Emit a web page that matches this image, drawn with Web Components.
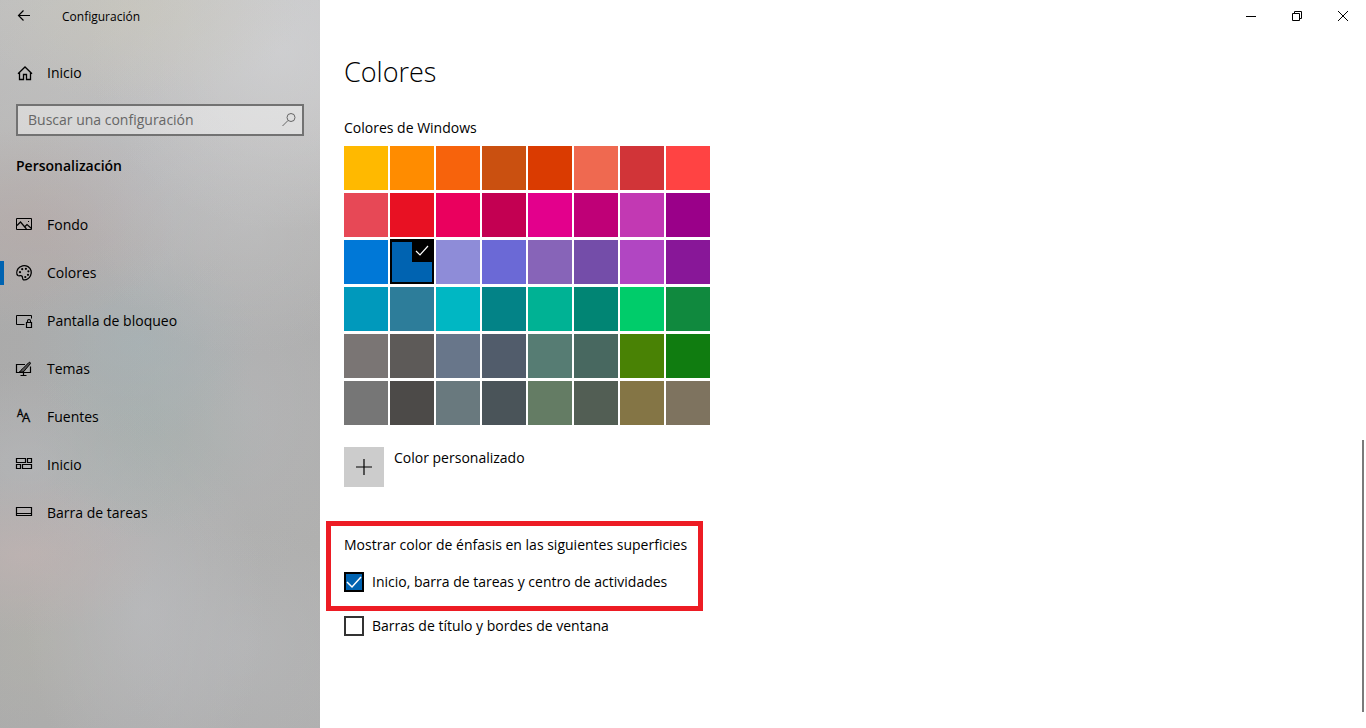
<!DOCTYPE html>
<html lang="es">
<head>
  <meta charset="utf-8">
  <meta name="viewport" content="width=device-width, initial-scale=1">
  <title>Configuración</title>
  <style>
    html, body {
      margin: 0;
      height: 100%;
    }

    body {
      font: 14px/20px "Open Sans", "Noto Sans", sans-serif;
      color: #000;
      background: #fff;
    }
  </style>
</head>
<body>
  <settings-window>
    <settings-sidebar slot="sidebar">
      <nav-item slot="home" icon="home">Inicio</nav-item>
      <search-box slot="search" label="Buscar una configuración"></search-box>
      <nav-item icon="picture">Fondo</nav-item>
      <nav-item icon="palette" active>Colores</nav-item>
      <nav-item icon="lockscreen">Pantalla de bloqueo</nav-item>
      <nav-item icon="themes">Temas</nav-item>
      <nav-item icon="fonts">Fuentes</nav-item>
      <nav-item icon="tiles">Inicio</nav-item>
      <nav-item icon="taskbar">Barra de tareas</nav-item>
    </settings-sidebar>
    <window-controls slot="controls"></window-controls>
    <colors-page></colors-page>
  </settings-window>

  <script>
    const ICONS = {
      back: '<path d="M14 6.500H2.500M7.500 1.500l-5 5 5 5" stroke-width="1.200"/>',
      home: '<path d="m2 8.700 7-6.700 7 6.700M3.500 7.500v7h4v-5h3v5h4v-7" stroke-width="1.300"/>',
      search: '<circle cx="11" cy="5.500" r="4"/><path d="M8 8.500 2.500 14"/>',
      picture: '<path d="M.5 1.500h15v11H.5z"/><path d="M1 8.500 4.500 5l6 7M9 9.500l2-2 4.500 4M12 4.500h1" stroke-width="1.200"/>',
      palette: '<path d="M7.500 14.800c-1.400-.6-.7-2.400-1.300-3.400-1-1.700-2.800.1-4.300-.9C.2 9.100.6 6 2.100 3.700 4.100.7 8.500-.4 12 1.600c3.200 1.900 4.200 6 2.500 9.200-1.500 2.700-4.400 4.400-7 4z" stroke-width="1.300"/><g fill="currentColor" stroke="none"><circle cx="4" cy="7.200" r="1.100"/><circle cx="6.200" cy="4.200" r="1.100"/><circle cx="9.900" cy="3.800" r="1.100"/><circle cx="12.400" cy="6.300" r="1.100"/><circle cx="12" cy="9.800" r="1.100"/><circle cx="9.300" cy="12" r="1.100"/></g>',
      lockscreen: '<path d="M8.500 11.500h-8v-9h15v3"/><path d="M10.500 9.500h5v5h-5zM11.500 9.500V8a1.500 1.500 0 0 1 3 0v1.500" stroke-width="1.200"/>',
      themes: '<path d="M9 3.500H.5v8h14v-6M7.500 12v2M4.500 14.500h6" stroke-width="1.200"/><path d="M3.500 10.500c1.900 0 1.400-2.500 3.200-2.800l6-6c1-1 2.300 0 1.500 1.200L9 9c-.5 1.800-3.400 2.800-5.500 1.500z" fill="#555"/>',
      fonts: '<g fill="currentColor" stroke="currentColor" stroke-width=".3" font-family="Open Sans, sans-serif"><text x="1" y="8" font-size="10">A</text><text x="6" y="13" font-size="13">A</text></g>',
      tiles: '<path d="M.5 1.500h9v4h-9zM11.500 1.500h4v4h-4zM.5 7.500h4v4h-4zM6.500 7.500h9v4h-9z" stroke-width="1.200"/>',
      taskbar: '<path d="M.5 2.500h15v8H.5zM.5 8.500h15" stroke-width="1.200"/>',
      plus: '<path d="M8 0v16M0 8h16" stroke-width="1.200"/>',
      minimize: '<path d="M3 8.500h10"/>',
      restore: '<path d="M3.500 5.500h7v7h-7zM5.500 5.500v-2h7v7h-2"/>',
      close: '<path d="m3 3 10 10M13 3 3 13"/>',
    };

    const icon = (name, size = 16) => `
      <svg width="${ size }" height="${ size }" viewBox="0 0 ${ size } ${ size }" fill="none"
        stroke="currentColor" aria-hidden="true">${ ICONS[name] }</svg>`;

    // base class: every element renders its own template into an open shadow root
    class BaseElement extends HTMLElement {
      connectedCallback () {
        if (this.shadowRoot) return;
        const template = document.createElement('template');
        template.innerHTML = this.render();
        this.attachShadow({ mode: 'open' }).appendChild(template.content.cloneNode(true));
      }
    }

    class SettingsWindow extends BaseElement {
      render () {
        return `
          <style>
            :host {
              display: grid;
              grid-template-columns: 320px 1fr;
              min-height: 100%;
            }
            .page {
              display: grid;
              grid-template-columns: 1fr auto;
              grid-template-rows: auto 1fr;
            }
            header {
              grid-column: 1 / -1;
              display: flex;
              justify-content: flex-end;
            }
            main {
              padding: 20px 24px 24px;
            }
            .rail {
              display: flex;
              align-items: flex-end;
              padding: 0 2px 16px;
            }
            .thumb {
              width: 2px;
              height: 40%;
              background: #7a7a7a;
            }
          </style>
          <slot name="sidebar"></slot>
          <div class="page">
            <header><slot name="controls"></slot></header>
            <main><slot></slot></main>
            <div class="rail"><div class="thumb"></div></div>
          </div>
        `;
      }
    }

    class WindowControls extends BaseElement {
      render () {
        return `
          <style>
            :host { display: flex; }
            button {
              display: grid;
              place-items: center;
              width: 46px;
              height: 32px;
              padding: 0;
              border: 0;
              color: inherit;
              background: none;
            }
            button:hover { background: #e5e5e5; }
          </style>
          <button type="button" aria-label="Minimizar">${ icon('minimize') }</button>
          <button type="button" aria-label="Restaurar">${ icon('restore') }</button>
          <button type="button" aria-label="Cerrar">${ icon('close') }</button>
        `;
      }
    }

    class SettingsSidebar extends BaseElement {
      render () {
        return `
          <style>
            :host {
              display: block;
              /* blurred wallpaper showing through */
              background:
                radial-gradient(ellipse 170px 90px at 130px 10px, rgba(202, 199, 184, .5), transparent),
                radial-gradient(ellipse 190px 180px at 280px 50px, rgba(212, 213, 216, .6), transparent),
                radial-gradient(ellipse 140px 100px at 35px 225px, rgba(184, 168, 166, .5), transparent),
                radial-gradient(ellipse 150px 130px at 245px 225px, rgba(194, 195, 197, .5), transparent),
                radial-gradient(ellipse 110px 130px at 140px 180px, rgba(186, 187, 192, .5), transparent),
                radial-gradient(ellipse 120px 100px at 140px 340px, rgba(166, 180, 184, .6), transparent),
                radial-gradient(ellipse 120px 110px at 150px 430px, rgba(165, 177, 175, .6), transparent),
                radial-gradient(ellipse 120px 160px at 245px 410px, rgba(182, 183, 185, .6), transparent),
                radial-gradient(ellipse 140px 80px at 25px 555px, rgba(194, 180, 179, .7), transparent),
                radial-gradient(ellipse 150px 100px at 30px 465px, rgba(186, 188, 192, .5), transparent),
                radial-gradient(ellipse 120px 190px at 145px 610px, rgba(187, 188, 191, .7), transparent),
                radial-gradient(ellipse 130px 120px at 245px 645px, rgba(184, 185, 187, .6), transparent),
                radial-gradient(ellipse 140px 110px at 40px 640px, rgba(180, 179, 172, .6), transparent),
                linear-gradient(100deg, rgba(160, 160, 160, .25), rgba(200, 200, 200, .1)),
                linear-gradient(#cacaca, #c3c2c1 18%, #b5b4b3 32%, #adadad 46%, #aeaead 75%, #adadad);
            }
            header {
              display: flex;
              align-items: center;
              height: 34px;
              margin-bottom: 15px;
              font-size: 12px;
            }
            header button {
              display: grid;
              place-items: center;
              width: 48px;
              height: 34px;
              margin-right: 14px;
              padding: 0;
              border: 0;
              color: inherit;
              background: none;
            }
            .search { padding: 7px 16px 0; }
            h2 {
              margin: 20px 16px 25px;
              font-size: 14px;
              line-height: 20px;
              font-weight: 600;
            }
          </style>
          <header>
            <button type="button" aria-label="Atrás">${ icon('back') }</button>
            <span>Configuración</span>
          </header>
          <slot name="home"></slot>
          <div class="search"><slot name="search"></slot></div>
          <h2>Personalización</h2>
          <nav><slot></slot></nav>
        `;
      }
    }

    class NavItem extends BaseElement {
      render () {
        const name = this.getAttribute('icon');
        return `
          <style>
            :host { display: block; }
            a {
              display: flex;
              align-items: center;
              height: 48px;
              padding-right: 16px;
              color: inherit;
              text-decoration: none;
            }
            a:hover { background: rgba(0, 0, 0, .08); }
            a::before {
              content: "";
              width: 4px;
              height: 24px;
              margin-right: 12px;
            }
            :host([active]) a::before { background: #0063b1; }
            svg {
              flex: none;
              width: 18px;
              height: 16px;
              margin-right: 13px;
              overflow: visible;
            }
          </style>
          <a href="#${ name }">
            <svg viewBox="0 0 18 16" fill="none" stroke="currentColor" aria-hidden="true">${ ICONS[name] }</svg>
            <span><slot></slot></span>
          </a>
        `;
      }
    }

    class SearchBox extends BaseElement {
      render () {
        const label = this.getAttribute('label');
        return `
          <style>
            :host {
              display: flex;
              align-items: center;
              box-sizing: border-box;
              height: 32px;
              padding: 0 6px 0 10px;
              border: 2px solid #727272;
              color: #666;
              background: rgba(255, 255, 255, .4);
            }
            input {
              flex: 1;
              min-width: 0;
              padding: 0;
              border: 0;
              outline: 0;
              font: inherit;
              background: none;
            }
            input::placeholder { color: #666; }
          </style>
          <input type="text" placeholder="${ label }" aria-label="${ label }">
          ${ icon('search') }
        `;
      }
    }

    const PALETTE = [
      '#ffb900', '#ff8c00', '#f7630c', '#ca5010', '#da3b01', '#ef6950', '#d13438', '#ff4343',
      '#e74856', '#e81123', '#ea005e', '#c30052', '#e3008c', '#bf0077', '#c239b3', '#9a0089',
      '#0078d7', '#0063b1', '#8e8cd8', '#6b69d6', '#8764b8', '#744da9', '#b146c2', '#881798',
      '#0099bc', '#2d7d9a', '#00b7c3', '#038387', '#00b294', '#018574', '#00cc6a', '#10893e',
      '#7a7574', '#5d5a58', '#68768a', '#515c6b', '#567c73', '#486860', '#498205', '#107c10',
      '#767676', '#4c4a48', '#69797e', '#4a5459', '#647c64', '#525e54', '#847545', '#7e735f',
    ];
    const ACCENT = '#0063b1';

    class ColorGrid extends BaseElement {
      render () {
        const swatches = PALETTE.map((color) => `
          <label style="background: ${ color }">
            <input type="radio" name="accent" value="${ color }" aria-label="${ color }"${ color === ACCENT ? ' checked' : '' }>
            <svg width="22" height="22" viewBox="0 0 22 22" fill="none" stroke="#fff" stroke-width="1.200" aria-hidden="true">
              <path fill="#000" stroke="none" d="M0 0h22v22H0z"/>
              <path d="m4 11 4 4 8-9"/>
            </svg>
          </label>`).join('');
        return `
          <style>
            :host {
              display: grid;
              grid-template-columns: repeat(8, 44px);
              gap: 3px 2px;
            }
            label {
              display: grid;
              height: 44px;
            }
            input, svg { grid-area: 1 / 1; }
            input {
              appearance: none;
              margin: 0;
            }
            input:checked {
              border: 2px solid #000;
              box-shadow: 0 -1px #000;
            }
            svg {
              justify-self: end;
              visibility: hidden;
            }
            input:checked + svg { visibility: visible; }
          </style>
          ${ swatches }
        `;
      }
    }

    class CheckOption extends BaseElement {
      render () {
        return `
          <style>
            :host { display: block; }
            label {
              display: flex;
              align-items: center;
              gap: 8px;
            }
            .box {
              display: grid;
              flex: none;
            }
            input, svg { grid-area: 1 / 1; }
            input {
              appearance: none;
              box-sizing: border-box;
              width: 20px;
              height: 20px;
              margin: 0;
              border: 2px solid #333;
            }
            input:checked {
              border-color: #000;
              background: #0063b1;
            }
            svg {
              visibility: hidden;
              pointer-events: none;
            }
            input:checked + svg { visibility: visible; }
          </style>
          <label>
            <span class="box">
              <input type="checkbox"${ this.hasAttribute('checked') ? ' checked' : '' }>
              <svg width="20" height="20" viewBox="0 0 20 20" fill="none" stroke="#fff" stroke-width="1.500" aria-hidden="true">
                <path d="m3 10 5 5 9-10"/>
              </svg>
            </span>
            <span><slot></slot></span>
          </label>
        `;
      }
    }

    class HighlightBox extends BaseElement {
      render () {
        return `
          <style>
            :host {
              display: block;
              box-sizing: border-box;
              width: fit-content;
              margin-left: -18px;
              padding: 9px 11px 14px 13px;
              border: 5px solid #ed1c24;
            }
          </style>
          <slot></slot>
        `;
      }
    }

    class ColorsPage extends BaseElement {
      render () {
        return `
          <style>
            :host { display: block; }
            h1, h2, p {
              margin: 0;
              font-size: 14px;
              font-weight: 400;
            }
            h1 {
              margin-bottom: 26px;
              font-size: 27px;
              font-weight: 300;
              line-height: 40px;
            }
            h2 { margin-bottom: 8px; }
            .custom {
              display: flex;
              align-items: flex-start;
              gap: 10px;
              margin: 22px 0 34px;
              padding: 0;
              border: 0;
              font: inherit;
              line-height: 22px;
              color: inherit;
              background: none;
            }
            .plus {
              display: grid;
              place-items: center;
              width: 40px;
              height: 40px;
              background: #ccc;
            }
            p { margin-bottom: 17px; }
            highlight-box { margin-bottom: 5px; }
          </style>
          <h1>Colores</h1>
          <h2>Colores de Windows</h2>
          <color-grid role="radiogroup" aria-label="Colores de Windows"></color-grid>
          <button class="custom" type="button">
            <span class="plus">${ icon('plus') }</span>
            <span>Color personalizado</span>
          </button>
          <highlight-box>
            <p>Mostrar color de énfasis en las siguientes superficies</p>
            <check-option checked>Inicio, barra de tareas y centro de actividades</check-option>
          </highlight-box>
          <check-option>Barras de título y bordes de ventana</check-option>
        `;
      }
    }

    customElements.define('settings-window', SettingsWindow);
    customElements.define('window-controls', WindowControls);
    customElements.define('settings-sidebar', SettingsSidebar);
    customElements.define('nav-item', NavItem);
    customElements.define('search-box', SearchBox);
    customElements.define('color-grid', ColorGrid);
    customElements.define('check-option', CheckOption);
    customElements.define('highlight-box', HighlightBox);
    customElements.define('colors-page', ColorsPage);
  </script>
</body>
</html>
